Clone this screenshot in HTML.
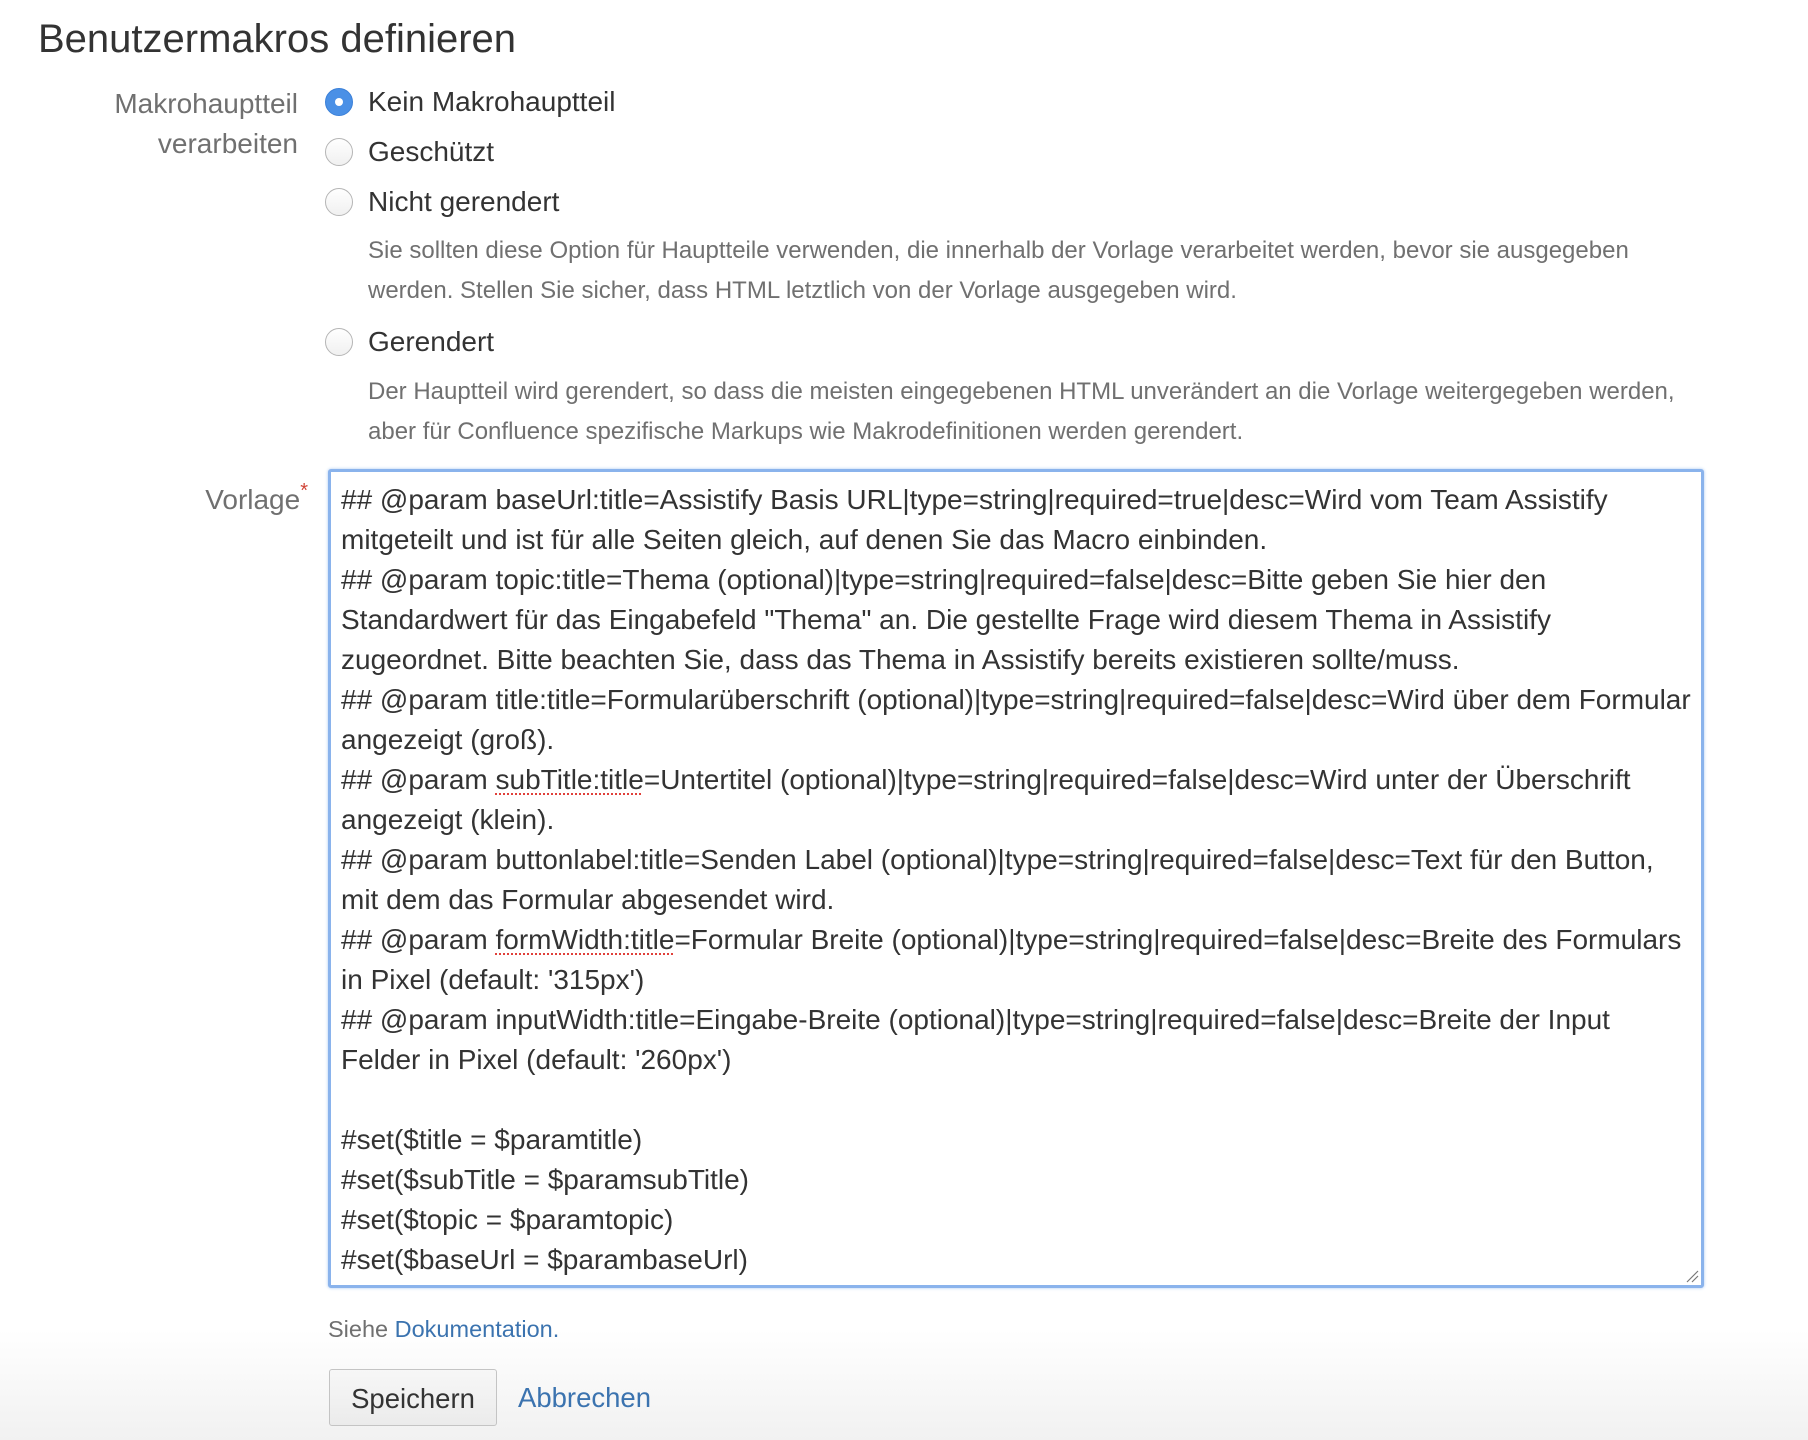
<!DOCTYPE html>
<html><head><meta charset="utf-8"><style>
html,body{margin:0;padding:0;}
body{width:1808px;height:1440px;position:relative;overflow:hidden;font-family:"Liberation Sans",Arial,sans-serif;color:#333;
background:linear-gradient(to bottom,#fff 0,#fff 1330px,#f1f1f1 1440px);}
.a{position:absolute;white-space:nowrap;}
h1{position:absolute;left:38px;top:17px;margin:0;font-weight:normal;font-size:40px;color:#333;}
.lbl{color:#707070;font-size:28px;text-align:right;}
.radio{position:absolute;width:26px;height:26px;border-radius:50%;border:1px solid #b5b5b5;background:linear-gradient(#fff,#f0f0f0);}
.radio.on{background:#4a90e6;border-color:#3b80d8;}
.radio.on::after{content:"";position:absolute;left:9px;top:9px;width:8px;height:8px;border-radius:50%;background:#fff;}
.opt{font-size:28px;color:#333;}
.desc{font-size:24px;color:#707070;line-height:40px;}
.ta{position:absolute;left:328px;top:469px;width:1370px;height:813px;border:3px solid #8ab3ec;border-radius:3px;box-shadow:0 0 3px #a8c8f2;background:#fff;}
.tt{position:absolute;left:10px;top:8px;font-size:28px;line-height:40px;white-space:pre;color:#333;}
.sp{text-decoration:underline dotted #e0403a;text-decoration-thickness:2px;text-underline-offset:4px;}
.btn{position:absolute;left:329px;top:1369px;width:168px;height:57px;border:1px solid #c4c4c4;border-radius:3px;background:linear-gradient(#f7f7f7,#ebebeb);font-size:27.5px;line-height:57px;text-align:center;color:#333;box-sizing:border-box;}
a{color:#3b73af;text-decoration:none;}
</style></head><body>
<h1>Benutzermakros definieren</h1>
<div class="a lbl" style="right:1510px;top:84px;line-height:40px;">Makrohauptteil<br>verarbeiten</div>
<div class="radio on" style="left:325px;top:88px;"></div>
<div class="a opt" style="left:368px;top:86px;">Kein Makrohauptteil</div>
<div class="radio" style="left:325px;top:138px;"></div>
<div class="a opt" style="left:368px;top:136px;">Geschützt</div>
<div class="radio" style="left:325px;top:188px;"></div>
<div class="a opt" style="left:368px;top:186px;">Nicht gerendert</div>
<div class="a desc" style="left:368px;top:231px;">Sie sollten diese Option für Hauptteile verwenden, die innerhalb der Vorlage verarbeitet werden, bevor sie ausgegeben<br>werden. Stellen Sie sicher, dass HTML letztlich von der Vorlage ausgegeben wird.</div>
<div class="radio" style="left:325px;top:328px;"></div>
<div class="a opt" style="left:368px;top:326px;">Gerendert</div>
<div class="a desc" style="left:368px;top:372px;">Der Hauptteil wird gerendert, so dass die meisten eingegebenen HTML unverändert an die Vorlage weitergegeben werden,<br>aber für Confluence spezifische Markups wie Makrodefinitionen werden gerendert.</div>
<div class="a lbl" style="right:1500px;top:484px;">Vorlage<span style="color:#d04437;font-size:20px;position:relative;top:-12px;">*</span></div>
<div class="ta"><div class="tt">## @param baseUrl:title=Assistify Basis URL|type=string|required=true|desc=Wird vom Team Assistify
mitgeteilt und ist für alle Seiten gleich, auf denen Sie das Macro einbinden.
## @param topic:title=Thema (optional)|type=string|required=false|desc=Bitte geben Sie hier den
Standardwert für das Eingabefeld "Thema" an. Die gestellte Frage wird diesem Thema in Assistify
zugeordnet. Bitte beachten Sie, dass das Thema in Assistify bereits existieren sollte/muss.
## @param title:title=Formularüberschrift (optional)|type=string|required=false|desc=Wird über dem Formular
angezeigt (groß).
## @param <span class="sp">subTitle:title</span>=Untertitel (optional)|type=string|required=false|desc=Wird unter der Überschrift
angezeigt (klein).
## @param buttonlabel:title=Senden Label (optional)|type=string|required=false|desc=Text für den Button,
mit dem das Formular abgesendet wird.
## @param <span class="sp">formWidth:title</span>=Formular Breite (optional)|type=string|required=false|desc=Breite des Formulars
in Pixel (default: '315px')
## @param inputWidth:title=Eingabe-Breite (optional)|type=string|required=false|desc=Breite der Input
Felder in Pixel (default: '260px')

#set($title = $paramtitle)
#set($subTitle = $paramsubTitle)
#set($topic = $paramtopic)
#set($baseUrl = $parambaseUrl)</div>
<svg style="position:absolute;right:2px;bottom:2px" width="14" height="14"><path d="M2 13L13 2M7 13L13 7" stroke="#777" stroke-width="1.2"/></svg></div>
<div class="a" style="left:328px;top:1316px;font-size:23.5px;color:#707070;">Siehe <a>Dokumentation.</a></div>
<div class="btn">Speichern</div>
<div class="a" style="left:518px;top:1382px;font-size:27.5px;"><a>Abbrechen</a></div>
</body></html>
